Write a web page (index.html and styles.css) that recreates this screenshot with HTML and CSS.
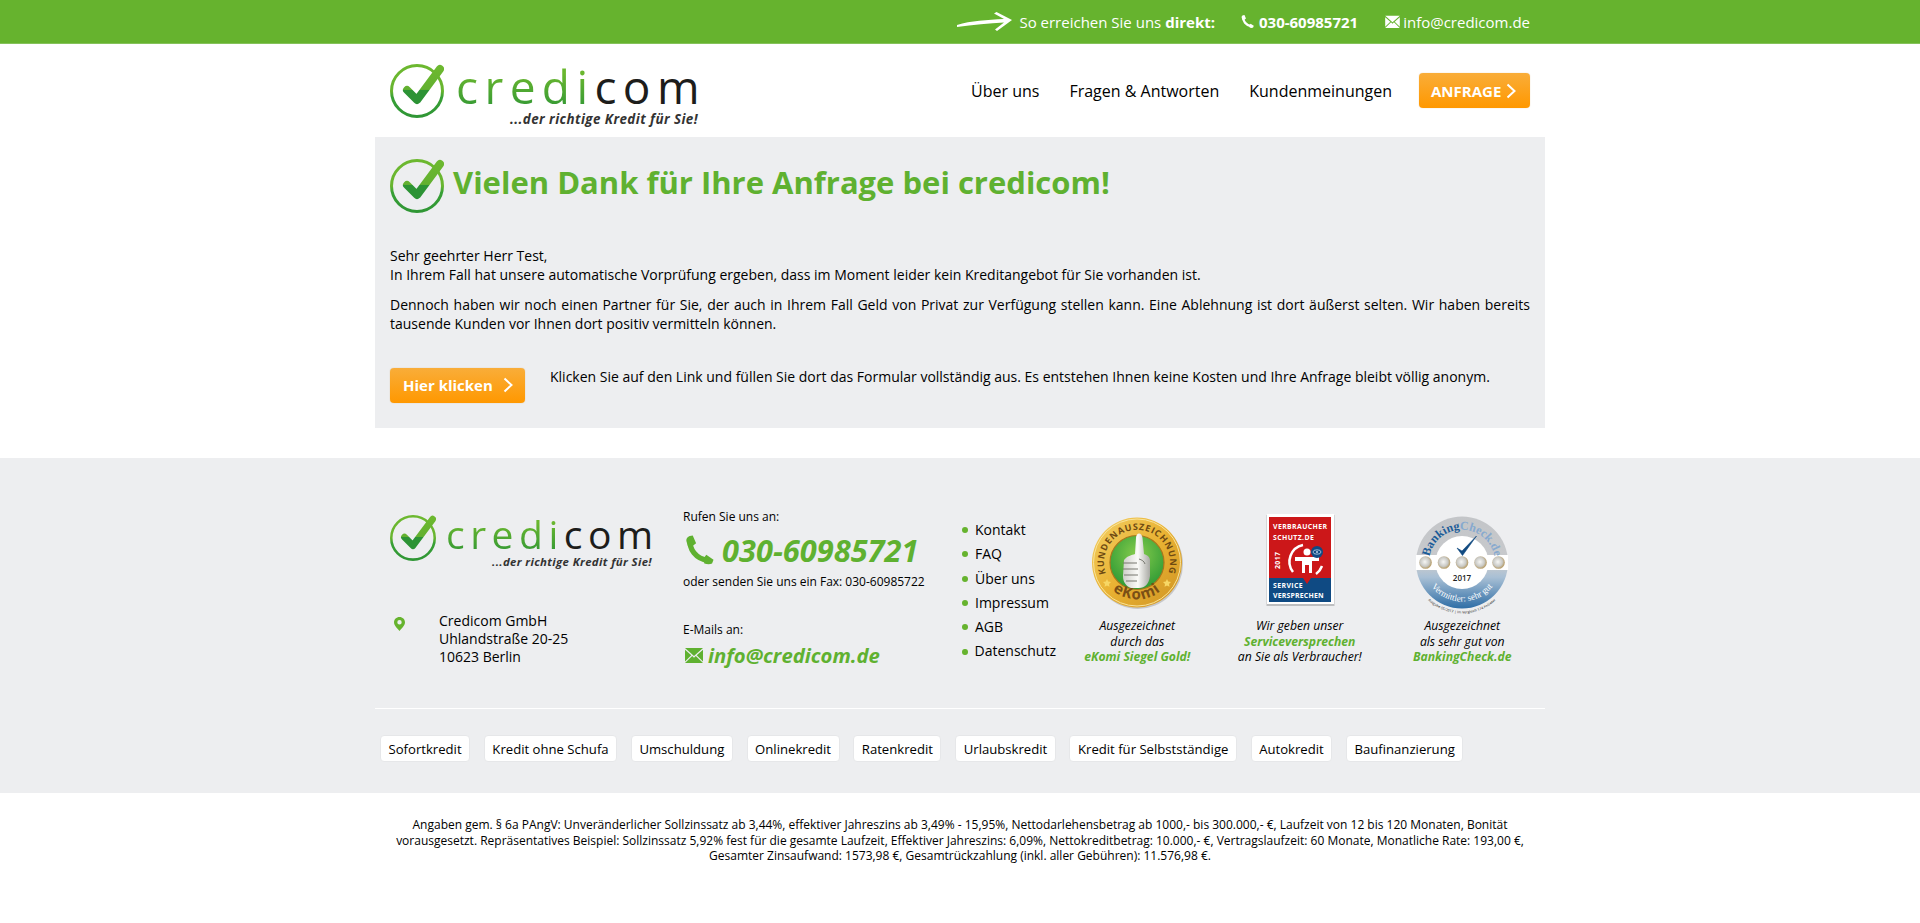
FILE: index.html
```html
<!DOCTYPE html>
<html lang="de">
<head>
<meta charset="utf-8">
<title>credicom</title>
<link rel="stylesheet" href="styles.css">
</head>
<body>
<svg class="defs" width="0" height="0" aria-hidden="true">
  <defs>
    <linearGradient id="ringGrad" x1="0" y1="0" x2="0" y2="1">
      <stop offset="0" stop-color="#6cb82f"/><stop offset=".5" stop-color="#68b52f"/><stop offset=".62" stop-color="#38a035"/><stop offset="1" stop-color="#2f9635"/>
    </linearGradient>
    <linearGradient id="checkGrad" x1="0" y1="0" x2="0" y2="1">
      <stop offset="0" stop-color="#6cb82f"/><stop offset=".66" stop-color="#62b030"/><stop offset=".68" stop-color="#2c9335"/><stop offset="1" stop-color="#2c9335"/>
    </linearGradient>
    <symbol id="check" viewBox="0 0 54 55">
      <circle cx="27" cy="28" r="25.5" fill="none" stroke="url(#ringGrad)" stroke-width="3"/>
      <path d="M17 27 L27 37 L50 6" fill="none" stroke="url(#checkGrad)" stroke-width="8" stroke-linecap="round" stroke-linejoin="round"/>
    </symbol>
    <symbol id="phone" viewBox="0 0 30 30">
      <path d="M5.5 4 C4 14 11 24 24 26" fill="none" stroke="currentColor" stroke-width="5.5"/>
      <path d="M1.5 6 C1 3 3 1 5 0.5 L8 0 L11.5 8 L7.5 11 L3 11Z M19 24 L22 20 L29.5 25 L28 29 C26 30 23 30 20 29Z" fill="currentColor"/>
    </symbol>
    <symbol id="mail" viewBox="0 0 18 16">
      <path d="M0 1 H18 L9 9Z M0 2.8 L6.3 8.2 L0 14.4Z M18 2.8 L11.7 8.2 L18 14.4Z M0 16 L7.2 9 L9 10.7 L10.8 9 L18 16Z" fill="currentColor"/>
    </symbol>
    <symbol id="chev" viewBox="0 0 10 16">
      <path d="M1.5 1.5 L8.5 8 L1.5 14.5" fill="none" stroke="currentColor" stroke-width="2"/>
    </symbol>
  </defs>
</svg>

<div class="topbar">
  <div class="topbar-in">
    <svg class="hand-arrow" viewBox="0 0 55 19"><path d="M0 13 C14 8.500 30 8 47 7 L37 1.500 L39.500 0 L55 8 L40 19 L38 17.500 L47 10.500 C32 11 16 13 0 15Z" fill="#fff"/></svg>
    <span class="reach">So erreichen Sie uns <b>direkt:</b></span>
    <svg class="ico-phone-s"><use href="#phone"/></svg>
    <b class="top-num">030-60985721</b>
    <svg class="ico-mail-s"><use href="#mail"/></svg>
    <span class="top-mail">info@credicom.de</span>
  </div>
</div>

<header class="header">
  <div class="logo">
    <svg class="logo-check"><use href="#check"/></svg>
    <div class="logo-text">
      <div class="word"><span class="word-green">credi</span><span class="word-dark">com</span></div>
      <div class="tag">...der richtige Kredit für Sie!</div>
    </div>
  </div>
  <nav class="nav">
    <a class="nav-link">Über uns</a>
    <a class="nav-link">Fragen &amp; Antworten</a>
    <a class="nav-link">Kundenmeinungen</a>
    <a class="btn btn-nav">ANFRAGE<svg class="chev-s"><use href="#chev"/></svg></a>
  </nav>
</header>

<main class="content">
  <div class="title-row">
    <svg class="logo-check"><use href="#check"/></svg>
    <h1 class="title">Vielen Dank für Ihre Anfrage bei credicom!</h1>
  </div>
  <p class="para first">Sehr geehrter Herr Test,<br>In Ihrem Fall hat unsere automatische Vorprüfung ergeben, dass im Moment leider kein Kreditangebot für Sie vorhanden ist.</p>
  <p class="para second">Dennoch haben wir noch einen Partner für Sie, der auch in Ihrem Fall Geld von Privat zur Verfügung stellen kann. Eine Ablehnung ist dort äußerst selten. Wir haben bereits tausende Kunden vor Ihnen dort positiv vermitteln können.</p>
  <div class="cta-row">
    <a class="btn btn-cta">Hier klicken<svg class="chev-l"><use href="#chev"/></svg></a>
    <p class="cta-text">Klicken Sie auf den Link und füllen Sie dort das Formular vollständig aus. Es entstehen Ihnen keine Kosten und Ihre Anfrage bleibt völlig anonym.</p>
  </div>
</main>

<footer class="footer">
  <div class="footer-in">
    <div class="foot-grid">
      <div class="col-logo">
        <div class="logo logo-small">
          <svg class="logo-check"><use href="#check"/></svg>
          <div class="logo-text">
            <div class="word"><span class="word-green">credi</span><span class="word-dark">com</span></div>
            <div class="tag">...der richtige Kredit für Sie!</div>
          </div>
        </div>
        <div class="address">
          <svg class="pin" viewBox="0 0 11 14"><path fill-rule="evenodd" d="M5.500 0 C8.600 0 11 2.300 11 5.200 C11 8.500 7.500 11.500 5.500 14 C3.500 11.500 0 8.500 0 5.200 C0 2.300 2.400 0 5.500 0Z M5.500 3 A2.200 2.200 0 1 0 5.500 7.400 A2.200 2.200 0 1 0 5.500 3Z" fill="#66b32e"/></svg>
          <div>Credicom GmbH<br>Uhlandstraße 20-25<br>10623 Berlin</div>
        </div>
      </div>
      <div class="col-contact">
        <div class="small">Rufen Sie uns an:</div>
        <div class="big-phone"><svg class="ico-phone-l"><use href="#phone"/></svg><span>030-60985721</span></div>
        <div class="small fax">oder senden Sie uns ein Fax: 030-60985722</div>
        <div class="small mails">E-Mails an:</div>
        <div class="big-mail"><svg class="ico-mail-l"><use href="#mail"/></svg><span>info@credicom.de</span></div>
      </div>
      <ul class="links">
        <li>Kontakt</li><li>FAQ</li><li>Über uns</li><li>Impressum</li><li>AGB</li><li>Datenschutz</li>
      </ul>
      <div class="badge">
        <svg class="seal" viewBox="0 0 100 96">
          <defs>
            <linearGradient id="gold" x1="0" y1="0" x2="1" y2="1"><stop offset="0" stop-color="#f3cf63"/><stop offset=".5" stop-color="#e9b233"/><stop offset="1" stop-color="#cf9322"/></linearGradient>
            <radialGradient id="greenIn" cx=".5" cy=".35" r=".65"><stop offset="0" stop-color="#86cc4c"/><stop offset="1" stop-color="#2f9a35"/></radialGradient>
            <linearGradient id="thumb" x1="0" y1="0" x2="1" y2="0"><stop offset="0" stop-color="#cfcfca"/><stop offset=".55" stop-color="#fbfbf8"/><stop offset="1" stop-color="#a9a9a4"/></linearGradient>
            <path id="ekTop" d="M18.300 58 A33 33 0 1 1 81.700 58"/>
            <path id="ekBot" d="M15 62 A38 38 0 0 0 85 62"/>
          </defs>
          <circle cx="51" cy="50" r="45" fill="#000" opacity=".16"/>
          <circle cx="50" cy="48.500" r="45" fill="url(#gold)"/>
          <circle cx="50" cy="48.500" r="43.500" fill="none" stroke="#f9e39a" stroke-width="1"/>
          <circle cx="50" cy="48.500" r="27" fill="url(#greenIn)" stroke="#a8761c" stroke-width="1.200"/>
          <text class="ek-ring"><textPath href="#ekTop" startOffset="50%" text-anchor="middle">KUNDENAUSZEICHNUNG</textPath></text>
          <text class="ek-name"><textPath href="#ekBot" startOffset="50%" text-anchor="middle">eKomi</textPath></text>
          <path d="M20 65 l1.200 2.600 2.800 .4 -2 2 .5 2.800 -2.500 -1.300 -2.500 1.300 .5 -2.800 -2 -2 2.800 -.4Z M80 65 l1.200 2.600 2.800 .4 -2 2 .5 2.800 -2.500 -1.300 -2.500 1.300 .5 -2.800 -2 -2 2.800 -.4Z" fill="#f7d765"/>
          <path d="M37 46 C40 42 45 41 48 40 L49 24 C49 18 55 18 55.500 24 L57 40 C60 41 63 43 63 46 L63 62 C62 70 58 74 52 74 L44 74 C39 72 36 68 36 62Z" fill="url(#thumb)"/>
          <path d="M36 49 H50 M36 55 H51 M37 61 H51 M39 67 H50 M52 45 C55 46 57 47 58 50" stroke="#77776f" stroke-width="1" fill="none"/>
        </svg>
        <p class="cap">Ausgezeichnet<br>durch das<br><b>eKomi Siegel Gold!</b></p>
      </div>
      <div class="badge">
        <svg class="seal" viewBox="0 0 100 96">
          <rect x="16.500" y="1" width="68" height="91" fill="#000" opacity=".2"/>
          <rect x="17" y="0" width="67" height="90" fill="#fff"/>
          <rect x="19" y="3" width="62" height="61" fill="#cc1719"/>
          <rect x="19" y="64" width="62" height="24" fill="#0f4a83"/>
          <path d="M53 64 H61 L57 70Z" fill="#cc1719"/>
          <text class="vb-h" x="23" y="15">VERBRAUCHER</text>
          <text class="vb-h" x="23" y="26">SCHUTZ.DE</text>
          <text class="vb-h" transform="translate(30 55) rotate(-90)">2017</text>
          <text class="vb-h" x="23" y="74">SERVICE</text>
          <text class="vb-h vb-w" x="23" y="84">VERSPRECHEN</text>
          <path d="M43 58 A17 17 0 0 1 53 31 M72 52 A17 17 0 0 1 66 60" fill="none" stroke="#fff" stroke-width="2.500"/>
          <circle cx="57" cy="38" r="3.500" fill="#fff"/>
          <path d="M45 43 H69 V47 H62 V59 H59 V51 H55 V59 H52 V47 H45Z" fill="#fff"/>
          <circle cx="67" cy="38" r="6" fill="#0f4a83"/>
          <ellipse cx="67" cy="38" rx="4" ry="2.200" fill="none" stroke="#bcd3ea" stroke-width=".8"/>
          <circle cx="67" cy="38" r="1" fill="#bcd3ea"/>
        </svg>
        <p class="cap">Wir geben unser<br><b>Serviceversprechen</b><br>an Sie als Verbraucher!</p>
      </div>
      <div class="badge">
        <svg class="seal" viewBox="0 0 100 96">
          <defs>
            <linearGradient id="bcRing" x1="0" y1="0" x2="0" y2="1"><stop offset="0" stop-color="#c3c5c8"/><stop offset=".52" stop-color="#c8cacd"/><stop offset=".66" stop-color="#a9c0d5"/><stop offset="1" stop-color="#2f6ea6"/></linearGradient>
            <radialGradient id="coin" cx=".45" cy=".45" r=".6"><stop offset="0" stop-color="#f6f6f4"/><stop offset=".6" stop-color="#c9c9c5"/><stop offset="1" stop-color="#b08e4a"/></radialGradient>
            <path id="bcTop" d="M19 60 A33 33 0 1 1 81 60"/>
            <path id="bcBot" d="M17 69.300 A39 39 0 0 0 83 69.300"/>
            <path id="bcFine" d="M12 82 A50 50 0 0 0 88 82"/>
          </defs>
          <circle cx="50" cy="48.500" r="46" fill="url(#bcRing)"/>
          <circle cx="50" cy="48.500" r="26.500" fill="#fff"/>
          <rect x="4" y="41" width="92" height="15" fill="#fff"/>
          <circle cx="13.500" cy="48.500" r="6.300" fill="url(#coin)"/><circle cx="32" cy="48.500" r="6.300" fill="url(#coin)"/><circle cx="50" cy="48.500" r="6.300" fill="url(#coin)"/><circle cx="68.500" cy="48.500" r="6.300" fill="url(#coin)"/><circle cx="86.500" cy="48.500" r="6.300" fill="url(#coin)"/>
          <path d="M45 34 L50 37 L64.500 22 L50.500 41.500Z" fill="#114a80" stroke="#114a80" stroke-width=".6" stroke-linejoin="round"/>
          <text class="bc-year" x="50" y="67">2017</text>
          <text class="bc-top"><textPath href="#bcTop" startOffset="50%" text-anchor="middle"><tspan fill="#1c5c98">Banking</tspan><tspan fill="#86a9cf">Check.de</tspan></textPath></text>
          <text class="bc-bot"><textPath href="#bcBot" startOffset="50%" text-anchor="middle">Vermittler: sehr gut</textPath></text>
          <text class="bc-fine"><textPath href="#bcFine" startOffset="50%" text-anchor="middle">Ausgabe 05/2017 | Im Vergleich 174 Anbieter</textPath></text>
        </svg>
        <p class="cap">Ausgezeichnet<br>als sehr gut von<br><b>BankingCheck.de</b></p>
      </div>
    </div>
    <div class="chips">
      <a class="chip">Sofortkredit</a><a class="chip">Kredit ohne Schufa</a><a class="chip">Umschuldung</a><a class="chip">Onlinekredit</a><a class="chip">Ratenkredit</a><a class="chip">Urlaubskredit</a><a class="chip">Kredit für Selbstständige</a><a class="chip">Autokredit</a><a class="chip">Baufinanzierung</a>
    </div>
  </div>
</footer>

<p class="legal">Angaben gem. § 6a PAngV: Unveränderlicher Sollzinssatz ab 3,44%, effektiver Jahreszins ab 3,49% - 15,95%, Nettodarlehensbetrag ab 1000,- bis 300.000,- €, Laufzeit von 12 bis 120 Monaten, Bonität vorausgesetzt. Repräsentatives Beispiel: Sollzinssatz 5,92% fest für die gesamte Laufzeit, Effektiver Jahreszins: 6,09%, Nettokreditbetrag: 10.000,- €, Vertragslaufzeit: 60 Monate, Monatliche Rate: 193,00 €, Gesamter Zinsaufwand: 1573,98 €, Gesamtrückzahlung (inkl. aller Gebühren): 11.576,98 €.</p>
</body>
</html>
```

FILE: styles.css
```css
* { box-sizing: border-box; }
html, body { margin: 0; padding: 0; }
body { background: #fff; color: #000; font: 14px/18px "Open Sans", "Noto Sans", sans-serif; }
.defs { display: block; height: 0; }

.topbar { height: 44px; background: #66b32e; border-bottom: 1px solid #85c25a; color: #fff; }
.topbar-in { width: 1170px; height: 43px; margin: 0 auto; padding-right: 15px; display: flex; align-items: center; justify-content: flex-end; font-size: 15px; }
.hand-arrow { width: 55px; height: 19px; margin-right: 7px; }
.reach { margin-right: 26px; }
.ico-phone-s { width: 13px; height: 15px; margin-right: 5px; color: #fff; }
.top-num { margin-right: 27px; }
.ico-mail-s { width: 15px; height: 13px; margin-right: 3px; color: #fff; }

.header { width: 1170px; height: 93px; margin: 0 auto; padding: 19px 15px 0; display: flex; justify-content: space-between; align-items: flex-start; }
.logo { display: flex; align-items: flex-start; }
.logo-check { width: 54px; height: 55px; flex: none; }
.logo-text { margin-left: 12px; width: 242px; }
.word { font-size: 46px; line-height: 46px; letter-spacing: 6.4px; white-space: nowrap; }
.word-green { background: linear-gradient(#6ab72f 30%, #2f9635 90%); -webkit-background-clip: text; background-clip: text; color: transparent; }
.word-dark { color: #1d1d1b; }
.tag { margin-top: 3px; font-size: 13.4px; letter-spacing: .43px; line-height: 14px; font-weight: 700; font-style: italic; color: #333; text-align: right; white-space: nowrap; }

.nav { display: flex; align-items: center; height: 35px; margin-top: 10px; font-size: 16px; }
.nav-link { margin-right: 30px; color: #000; }
.nav-link:nth-child(3) { margin-right: 27px; }
.btn { display: flex; align-items: center; color: #fff; font-weight: 700; border-radius: 4px; background: linear-gradient(#f9ad39, #ff9800); box-shadow: 0 0 1px rgba(200,120,0,.5); }
.btn-nav { width: 111px; height: 35px; padding-left: 12px; font-size: 15px; }
.chev-s { width: 10px; height: 16px; margin-left: 5px; }
.btn-cta { width: 135px; height: 35px; padding-left: 13px; font-size: 15px; flex: none; }
.chev-l { width: 10px; height: 16px; margin-left: 10px; }

.content { width: 1170px; height: 291px; margin: 0 auto; padding: 21px 15px 0; background: #edeef0; }
.title-row { display: flex; align-items: center; height: 55px; }
.title { margin: 0 0 7px 9px; color: #5fb130; font-size: 31px; line-height: 44px; font-weight: 700; }
.para { margin: 0; text-align: justify; line-height: 18.67px; }
.first { margin-top: 34px; }
.second { margin-top: 12px; }
.cta-row { display: flex; margin-top: 34px; }
.cta-text { margin: 0 0 0 25px; line-height: 18.67px; }

.footer { height: 335px; margin-top: 30px; background: #edeef0; }
.footer-in { width: 1170px; margin: 0 auto; padding-top: 50px; }
.foot-grid { display: grid; grid-template-columns: 293px 278px 95px repeat(3, 162.5px); margin-left: 15px; height: 200px; }
.col-logo { padding-top: 6px; }
.logo-small .logo-check { width: 46px; height: 47px; }
.logo-small .logo-text { margin-left: 10px; width: 206px; }
.logo-small .word { font-size: 39px; line-height: 39px; letter-spacing: 5.5px; }
.logo-small .tag { font-size: 11.4px; letter-spacing: .37px; line-height: 12px; }
.address { display: flex; margin-top: 44px; padding-left: 4px; }
.pin { width: 11px; height: 14px; margin: 5px 34px 0 0; flex: none; }

.small { font-size: 12px; line-height: 18px; }
.big-phone { display: flex; align-items: center; height: 30px; margin-top: 9px; padding-left: 2px; color: #5fb130; font-size: 30.8px; font-weight: 700; font-style: italic; }
.ico-phone-l { width: 29px; height: 30px; margin-right: 8px; flex: none; }
.fax { margin-top: 8px; white-space: nowrap; }
.mails { margin-top: 30px; }
.big-mail { display: flex; align-items: center; height: 24px; margin-top: 4px; padding-left: 2px; color: #5fb130; font-size: 20.3px; font-weight: 700; font-style: italic; }
.ico-mail-l { width: 18px; height: 16px; margin-right: 5px; flex: none; }

.links { list-style: none; margin: 10px 0 0; padding: 0; line-height: 24.3px; }
.links li { display: flex; align-items: center; white-space: nowrap; }
.links li::before { content: ""; width: 6px; height: 6px; margin: 0 7px 0 1px; border-radius: 50%; background: #66b32e; }

.badge { text-align: center; padding-top: 6px; }
.seal { display: block; width: 100px; height: 96px; margin: 0 auto; overflow: visible; }
.cap { margin: 8px 0 0; font-size: 12.2px; line-height: 15.5px; font-style: italic; white-space: nowrap; }
.cap b { color: #5fb130; }

.ek-ring { font: 700 9px "Open Sans", sans-serif; fill: #6e4a12; letter-spacing: .8px; }
.ek-name { font: 700 15px "Open Sans", sans-serif; fill: #7a4f15; letter-spacing: 1px; }
.vb-h { font: 700 6.9px "Open Sans", sans-serif; fill: #fff; letter-spacing: .4px; }
.vb-w { letter-spacing: .2px; }
.bc-year { font: 600 8px "Open Sans", sans-serif; fill: #222; text-anchor: middle; }
.bc-top { font: 700 12px "Liberation Serif", serif; }
.bc-bot { font: 400 9px "Liberation Serif", serif; fill: #fff; }
.bc-fine { font: 400 3.500px "Open Sans", sans-serif; fill: #222; }

.chips { display: flex; gap: 13.75px; height: 54px; margin-top: 0; padding: 26px 0 0 5px; border-top: 1px solid #fff; }
.chip { height: 27px; padding: 0 7.5px; display: flex; align-items: center; background: #fff; border-radius: 4px; border: 1px solid #e6e7e9; font-size: 13.13px; white-space: nowrap; }

.legal { width: 1140px; margin: 24px auto 0; font-size: 12px; line-height: 15.6px; text-align: center; }
```
